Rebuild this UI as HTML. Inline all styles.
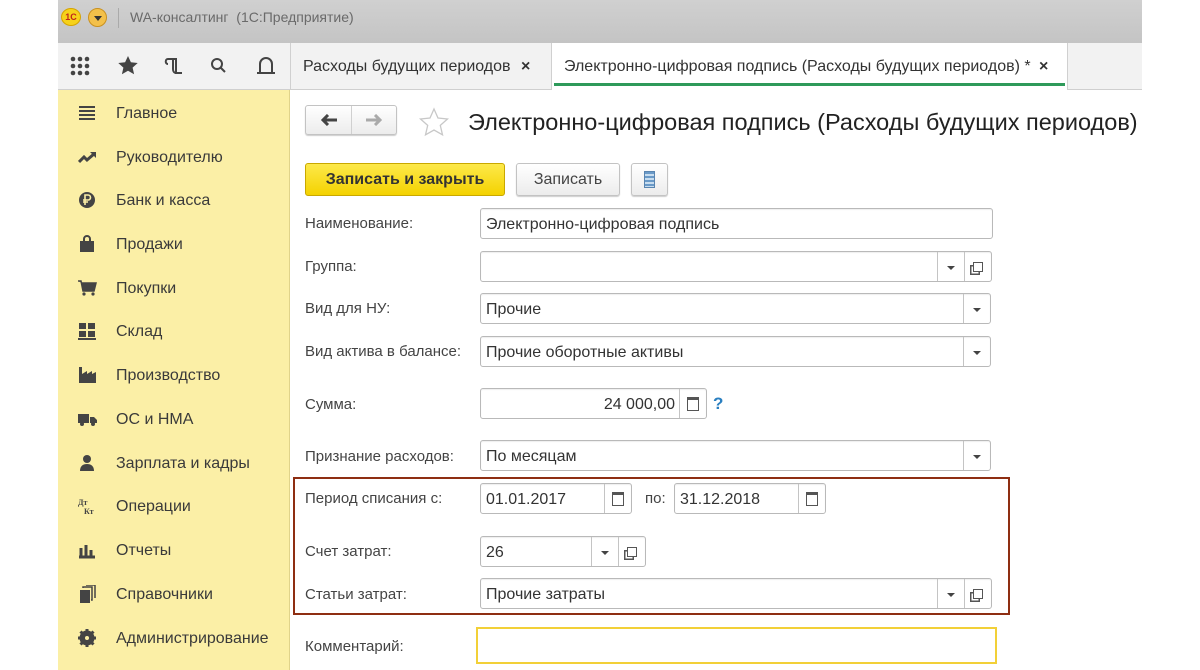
<!DOCTYPE html>
<html><head><meta charset="utf-8"><style>
*{box-sizing:border-box;margin:0;padding:0}
body{width:1200px;height:670px;overflow:hidden;background:#fff;font-family:"Liberation Sans",Arial,sans-serif;position:relative;color:#333}
.abs{position:absolute}
#title{left:58px;top:0;width:1084px;height:43px;background:linear-gradient(#d0d0d0,#c4c4c4)}
#tool{left:58px;top:43px;width:1084px;height:47px;background:#f2f2f2;border-bottom:1px solid #cfcfcf}
#side{left:58px;top:90px;width:232px;height:580px;background:#fbefa6;border-right:1px solid #e0d38a}
.si{position:absolute;left:58px;font-size:16px;color:#3a3a3a}
.si span{position:absolute;left:58px;top:-8px;white-space:nowrap}
.si svg{position:absolute;left:20px;top:-9px}
.lbl{position:absolute;left:305px;font-size:15px;color:#444;white-space:nowrap}
.fld{position:absolute;height:31px;border:1px solid #b9b9b9;border-radius:3px;background:#fff;font-size:16px;color:#333;padding:7px 5px 0;white-space:nowrap;box-shadow:inset 0 1px 1px #eee}
.btn{position:absolute;top:0;bottom:0;width:27px;border-left:1px solid #c4c4c4;display:flex;align-items:center;justify-content:center}
.dd::after{content:"";border:4px solid transparent;border-top:4px solid #444;border-bottom:0;margin-top:2px}
.op::after{content:"";width:8px;height:8px;border:1.5px solid #555;box-shadow:-3px 3px 0 -1.5px #fff,-3px 3px 0 0 #555}
.cal::after{content:"";width:10px;height:10px;border:1.5px solid #555;border-top-width:3px}
.bt{position:absolute;border:1px solid #c3c3c3;border-radius:3px;background:linear-gradient(#fff,#ececec);box-shadow:0 1px 1px #ccc}
</style></head><body>
<div class="abs" id="title"></div>
<div class="abs" style="left:61px;top:8px;width:20px;height:18px;border-radius:50%;background:#f6d21a;border:1px solid #d6a400;font-size:9px;font-weight:bold;color:#c0261b;text-align:center;line-height:16px">1С</div>
<div class="abs" style="left:88px;top:8px;width:19px;height:19px;border-radius:50%;background:#f3c04a;border:1px solid #c99120"><div style="margin:7px auto 0;width:0;border:4px solid transparent;border-top:5px solid #333;border-bottom:0"></div></div>
<div class="abs" style="left:118px;top:8px;width:1px;height:20px;background:#aaa"></div>
<div class="abs" style="left:130px;top:9px;font-size:14px;color:#6a6a6a">WA-консалтинг &nbsp;(1С:Предприятие)</div>
<div class="abs" id="tool"></div>
<svg class="abs" style="left:68px;top:52px" width="220" height="30" viewBox="0 0 220 30">
<g fill="#444"><circle cx="5" cy="7" r="2.3"/><circle cx="12" cy="7" r="2.3"/><circle cx="19" cy="7" r="2.3"/><circle cx="5" cy="14" r="2.3"/><circle cx="12" cy="14" r="2.3"/><circle cx="19" cy="14" r="2.3"/><circle cx="5" cy="21" r="2.3"/><circle cx="12" cy="21" r="2.3"/><circle cx="19" cy="21" r="2.3"/>
<path d="M60 4l2.9 6.3 6.8.7-5.1 4.6 1.5 6.7L60 18.8l-6.1 3.5 1.5-6.7-5.1-4.6 6.8-.7z"/></g>
<g fill="none" stroke="#444" stroke-width="2"><path d="M100 7h8v14h6M100 7c-3 0-3 5 0 5M108 21c-2 0-3-2-3-4V7"/><circle cx="149" cy="12" r="5"/><path d="M153 16l4 4"/><path d="M192 21V12a6 6 0 0112 0v9zM189 21h18"/></g></svg>
<div class="abs" style="left:290px;top:43px;width:1px;height:47px;background:#d0d0d0"></div>
<div class="abs" style="left:303px;top:58px;font-size:16px;color:#333">Расходы будущих периодов <b style="margin-left:6px">×</b></div>
<div class="abs" style="left:551px;top:43px;width:517px;height:47px;background:#fff;border-left:1px solid #d0d0d0;border-right:1px solid #d0d0d0"></div>
<div class="abs" style="left:554px;top:83px;width:511px;height:3px;background:#2e9a5a"></div>
<div class="abs" style="left:564px;top:58px;font-size:16px;color:#333;white-space:nowrap">Электронно-цифровая подпись (Расходы будущих периодов) * <b style="margin-left:4px">×</b></div>
<div class="abs" id="side"></div>
<div class="si" style="top:113px"><svg width="20" height="18"><path d="M1 3h16M1 7h16M1 11h16M1 15h16" stroke="#444" stroke-width="2"/></svg><span>Главное</span></div>
<div class="si" style="top:157px"><svg width="20" height="18"><path d="M1 14l5-5 3 3 7-6" stroke="#444" stroke-width="3" fill="none"/><path d="M12 4h6v6z" fill="#444"/></svg><span>Руководителю</span></div>
<div class="si" style="top:200px"><svg width="20" height="18"><circle cx="9" cy="9" r="8" fill="#444"/><path d="M7 14V4h3a2.5 2.5 0 010 5H5M5 11h5" stroke="#fbefa6" stroke-width="1.6" fill="none"/></svg><span>Банк и касса</span></div>
<div class="si" style="top:244px"><svg width="20" height="18"><path d="M2 6h14v11H2z" fill="#444"/><path d="M6 7V4a3 3 0 016 0v3" stroke="#444" stroke-width="2" fill="none"/></svg><span>Продажи</span></div>
<div class="si" style="top:288px"><svg width="20" height="18"><path d="M0 2h3l2 10h11l2-8H4" fill="#444" stroke="#444" stroke-width="1.5"/><circle cx="6" cy="15" r="1.6" fill="#444"/><circle cx="15" cy="15" r="1.6" fill="#444"/></svg><span>Покупки</span></div>
<div class="si" style="top:331px"><svg width="20" height="18"><path d="M1 1h7v6H1zM10 1h7v6h-7zM1 9h7v6H1zM10 9h7v6h-7zM0 16h18v2H0z" fill="#444"/></svg><span>Склад</span></div>
<div class="si" style="top:375px"><svg width="20" height="18"><path d="M1 17V1h3v7l5-3v3l5-3v3l4-2v11z" fill="#444"/></svg><span>Производство</span></div>
<div class="si" style="top:419px"><svg width="20" height="18"><path d="M0 4h11v9H0zM12 7h4l3 3v3h-7z" fill="#444"/><circle cx="4" cy="14" r="2" fill="#444"/><circle cx="15" cy="14" r="2" fill="#444"/></svg><span>ОС и НМА</span></div>
<div class="si" style="top:463px"><svg width="20" height="18"><circle cx="9" cy="5" r="4" fill="#444"/><path d="M2 17c0-5 3-7 7-7s7 2 7 7z" fill="#444"/></svg><span>Зарплата и кадры</span></div>
<div class="si" style="top:506px"><svg width="20" height="18"><text x="0" y="8" font-size="8" font-weight="bold" fill="#444" font-family="Liberation Serif">Дт</text><text x="6" y="17" font-size="8" font-weight="bold" fill="#444" font-family="Liberation Serif">Кт</text></svg><span>Операции</span></div>
<div class="si" style="top:550px"><svg width="20" height="18"><path d="M3 15V7M8 15V4M13 15V9M1 16h16" stroke="#444" stroke-width="3"/></svg><span>Отчеты</span></div>
<div class="si" style="top:594px"><svg width="20" height="18"><path d="M2 5h10v13H2z" fill="#444"/><path d="M5 3V2h9v13h-1M8 0h9v13" stroke="#444" stroke-width="1.5" fill="none"/></svg><span>Справочники</span></div>
<div class="si" style="top:638px"><svg width="20" height="18"><circle cx="9" cy="9" r="5.5" fill="none" stroke="#444" stroke-width="4"/><path d="M9 0v18M0 9h18M2.5 2.5l13 13M15.5 2.5l-13 13" stroke="#444" stroke-width="3"/><circle cx="9" cy="9" r="2" fill="#fbefa6"/></svg><span>Администрирование</span></div>

<div class="bt" style="left:305px;top:105px;width:92px;height:30px"><div style="position:absolute;left:45px;top:0;bottom:0;border-left:1px solid #d0d0d0"></div>
<svg style="position:absolute;left:14px;top:8px" width="18" height="12"><path d="M17 6H4M8 1L3 6l5 5" stroke="#444" stroke-width="3" fill="none"/></svg>
<svg style="position:absolute;left:59px;top:8px" width="18" height="12"><path d="M1 6h13M10 1l5 5-5 5" stroke="#aaa" stroke-width="3" fill="none"/></svg></div>
<svg class="abs" style="left:418px;top:107px" width="32" height="30"><path d="M16 2l4 9 9.5 1-7.2 6.4 2.2 9.4L16 23l-8.5 4.8 2.2-9.4L2.5 12l9.5-1z" fill="none" stroke="#c8c8c8" stroke-width="1.3"/></svg>
<div class="abs" style="left:468px;top:109px;font-size:23.5px;color:#222;white-space:nowrap">Электронно-цифровая подпись (Расходы будущих периодов)</div>
<div class="abs" style="left:305px;top:163px;width:200px;height:33px;border:1px solid #c9a800;border-radius:3px;background:linear-gradient(#fde94a,#f4d200);font-size:16px;font-weight:bold;color:#333;text-align:center;line-height:31px">Записать и закрыть</div>
<div class="bt" style="left:516px;top:163px;width:104px;height:33px;font-size:16px;text-align:center;line-height:31px;color:#444">Записать</div>
<div class="bt" style="left:631px;top:163px;width:37px;height:33px"><div style="margin:7px auto;width:11px;height:17px;background:repeating-linear-gradient(#6a9ac8 0 2px,#c8ddef 2px 4px);border:1px solid #5a85b0"></div></div>

<div class="lbl" style="top:215px">Наименование:</div>
<div class="fld" style="left:480px;top:208px;width:513px">Электронно-цифровая подпись</div>
<div class="lbl" style="top:258px">Группа:</div>
<div class="fld" style="left:480px;top:251px;width:512px"><div class="btn dd" style="right:27px"></div><div class="btn op" style="right:0"></div></div>
<div class="lbl" style="top:300px">Вид для НУ:</div>
<div class="fld" style="left:480px;top:293px;width:511px">Прочие<div class="btn dd" style="right:0"></div></div>
<div class="lbl" style="top:343px">Вид актива в балансе:</div>
<div class="fld" style="left:480px;top:336px;width:511px">Прочие оборотные активы<div class="btn dd" style="right:0"></div></div>
<div class="lbl" style="top:396px">Сумма:</div>
<div class="fld" style="left:480px;top:388px;width:227px;text-align:right;padding-right:31px">24 000,00<div class="btn cal" style="right:0"></div></div>
<div class="abs" style="left:713px;top:394px;font-size:17px;font-weight:bold;color:#2a7fc0">?</div>
<div class="lbl" style="top:448px">Признание расходов:</div>
<div class="fld" style="left:480px;top:440px;width:511px">По месяцам<div class="btn dd" style="right:0"></div></div>
<div class="abs" style="left:293px;top:477px;width:717px;height:138px;border:2px solid #8e2e12"></div>
<div class="lbl" style="top:490px">Период списания с:</div>
<div class="fld" style="left:480px;top:483px;width:152px">01.01.2017<div class="btn cal" style="right:0"></div></div>
<div class="abs" style="left:645px;top:490px;font-size:15px;color:#444">по:</div>
<div class="fld" style="left:674px;top:483px;width:152px">31.12.2018<div class="btn cal" style="right:0"></div></div>
<div class="lbl" style="top:543px">Счет затрат:</div>
<div class="fld" style="left:480px;top:536px;width:166px">26<div class="btn dd" style="right:27px"></div><div class="btn op" style="right:0"></div></div>
<div class="lbl" style="top:586px">Статьи затрат:</div>
<div class="fld" style="left:480px;top:578px;width:512px">Прочие затраты<div class="btn dd" style="right:27px"></div><div class="btn op" style="right:0"></div></div>
<div class="lbl" style="top:638px">Комментарий:</div>
<div class="abs" style="left:476px;top:627px;width:521px;height:37px;border:2px solid #f2d038"></div>
</body></html>
